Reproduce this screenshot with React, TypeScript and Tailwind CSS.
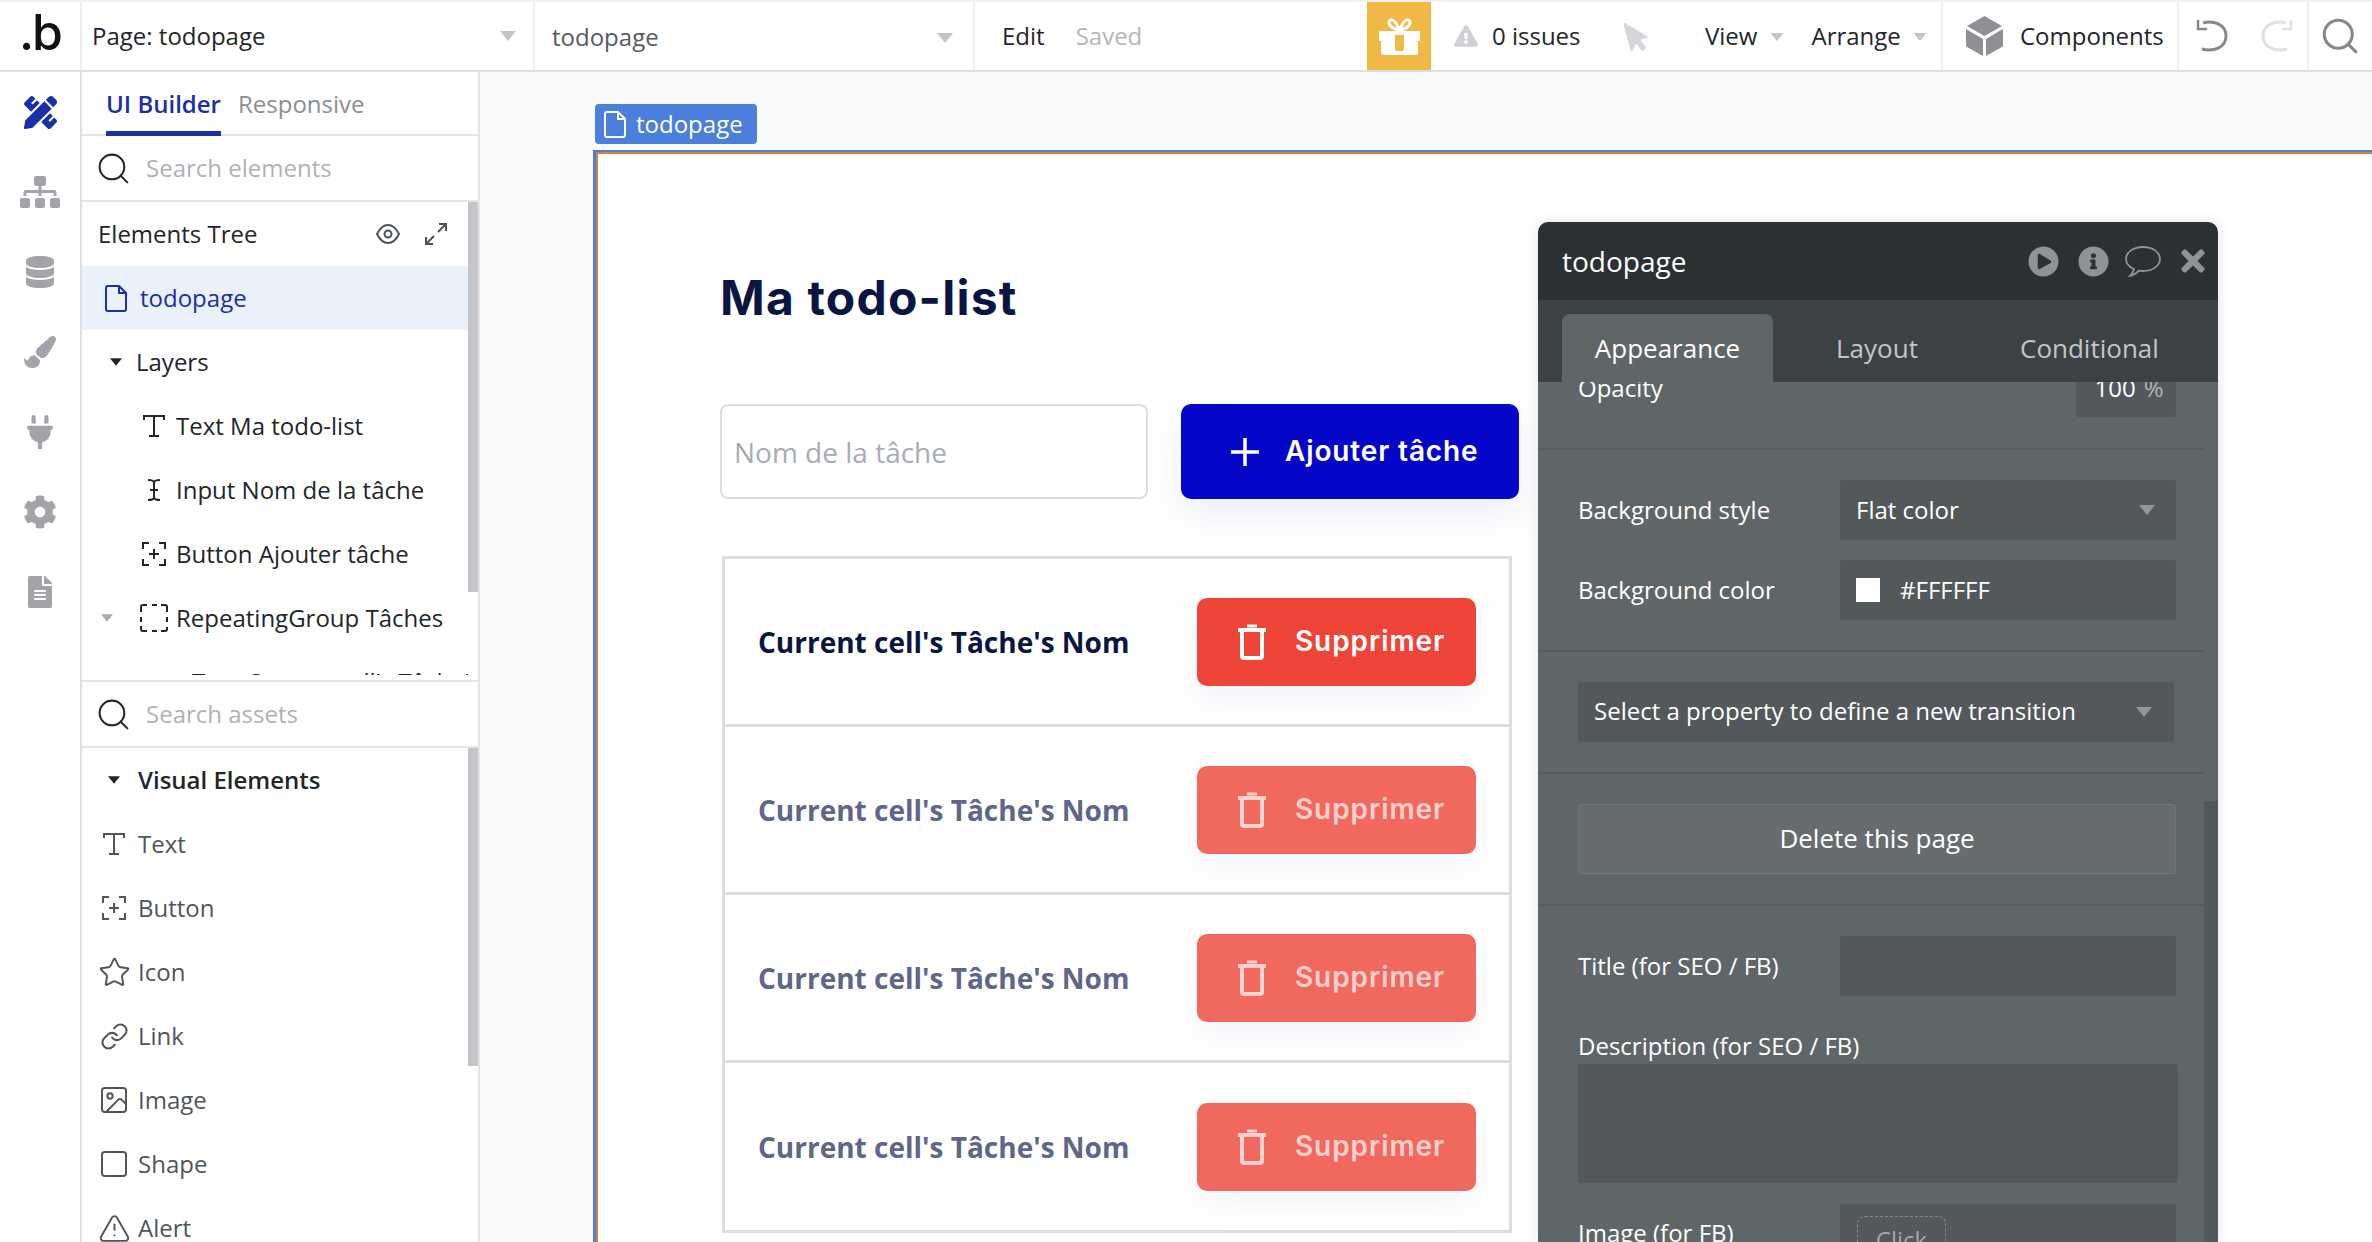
import React from 'react';
import {
  FaCog,
  FaDatabase,
  FaExclamationTriangle,
  FaFileAlt,
  FaInfoCircle,
  FaMousePointer,
  FaPaintBrush,
  FaPencilRuler,
  FaPlayCircle,
  FaPlug,
  FaSitemap,
  FaTimes,
} from 'react-icons/fa';
import { Image, Link, Search, Square, Star, TriangleAlert } from 'lucide-react';

const Caret = ({ className }: { className: string }) => (
  <svg viewBox="0 0 16 10" className={className} fill="currentColor">
    <path d="M0 0h16L8 10z" />
  </svg>
);

const PageIcon = ({ className }: { className: string }) => (
  <svg viewBox="0 0 22 27" className={className} fill="none" stroke="currentColor" strokeWidth="2">
    <path d="M3 1h11l7 7v16a2 2 0 0 1-2 2H3a2 2 0 0 1-2-2V3a2 2 0 0 1 2-2z" />
    <path d="M14 1v7h7" />
  </svg>
);

const TextIcon = () => (
  <svg viewBox="0 0 22 22" className="w-[22px] h-[22px]" fill="none" stroke="currentColor" strokeWidth="2">
    <path d="M1 5V1h20v4M11 1v20M6 21h10" />
  </svg>
);

const InputIcon = () => (
  <svg viewBox="0 0 14 22" className="w-[14px] h-[22px]" fill="none" stroke="currentColor" strokeWidth="2">
    <path d="M1 1c3 0 5 0 6 2 1-2 3-2 6-2M7 3v16M1 21c3 0 5 0 6-2 1 2 3 2 6 2M3 11h8" />
  </svg>
);

const ButtonIcon = () => (
  <svg viewBox="0 0 24 24" className="w-[24px] h-[24px]" fill="none" stroke="currentColor" strokeWidth="2">
    <path d="M1 7V1h6M17 1h6v6M23 17v6h-6M7 23H1v-6M12 7v10M7 12h10" />
  </svg>
);

const GroupIcon = () => (
  <svg viewBox="0 0 28 28" className="w-[28px] h-[28px]" fill="none" stroke="currentColor" strokeWidth="2">
    <path d="M1 8V3a2 2 0 0 1 2-2h4M12 1h5M21 1h4a2 2 0 0 1 2 2v5M27 13v5M1 13v5M1 22v3a2 2 0 0 0 2 2h4M12 27h5M21 27h4a2 2 0 0 0 2-2v-2" />
  </svg>
);

const TrashIcon = () => (
  <svg viewBox="0 0 28 36" className="w-[28px] h-[36px]" fill="none" stroke="currentColor" strokeWidth="4">
    <path d="M0 6h28" />
    <path d="M9 2h10" strokeWidth="3" />
    <path d="M4 8v24a2 2 0 0 0 2 2h16a2 2 0 0 0 2-2V8" />
  </svg>
);

const Supprimer = ({ faded }: { faded?: boolean }) => (
  <div
    className={
      faded
        ? 'w-[279px] h-[88px] rounded-[10px] bg-[#f1695e] flex items-center pl-[41px] gap-[29px] text-white/70 shadow-[0_12px_30px_rgba(70,90,170,0.06)]'
        : 'w-[279px] h-[88px] rounded-[10px] bg-[#ef4538] flex items-center pl-[41px] gap-[29px] text-white shadow-[0_12px_30px_rgba(70,90,170,0.08)]'
    }
  >
    <TrashIcon />
    <span className="font-['Inter',sans-serif] font-semibold text-[28px] leading-none tracking-[0.9px] -mt-[2px]">Supprimer</span>
  </div>
);

const TaskRow = ({ faded, last }: { faded?: boolean; last?: boolean }) => (
  <div className={last ? 'h-[167px] flex items-center justify-between pl-[33px] pr-[33px]' : 'h-[168px] border-b-[3px] border-[#dcdde3] flex items-center justify-between pl-[33px] pr-[33px]'}>
    <span className={faded ? 'font-bold text-[28px] text-[#5f6788]' : 'font-bold text-[28px] text-[#0a1641]'}>Current cell's Tâche's Nom</span>
    <Supprimer faded={faded} />
  </div>
);

const TreeRow = ({ icon, label, caret }: { icon: React.ReactNode; label: string; caret?: boolean }) => (
  <div className="h-[64px] flex items-center text-[#22262a] text-[24px]">
    <div className="w-[32px] pl-[17px] flex justify-center shrink-0">{caret && <Caret className="w-[12px] h-[8px] text-[#a9abb0] shrink-0" />}</div>
    <div className="w-[62px] pl-[18px] flex justify-center shrink-0">{icon}</div>
    <span>{label}</span>
  </div>
);

const AssetRow = ({ icon, label }: { icon: React.ReactNode; label: string }) => (
  <div className="h-[64px] flex items-center text-[#50555a] text-[24px]">
    <div className="w-[56px] pl-[8px] flex justify-center shrink-0">{icon}</div>
    <span>{label}</span>
  </div>
);

const Field = ({ label, children }: { label: string; children?: React.ReactNode }) => (
  <div className="flex items-center h-[60px]">
    <span className="w-[262px] shrink-0">{label}</span>
    <div className="w-[336px] h-[60px] rounded-[3px] bg-[#53585b] flex items-center px-[16px] shrink-0">{children}</div>
  </div>
);

const SearchRow = ({ placeholder }: { placeholder: string }) => (
  <div className="h-[66px] border-b-2 border-[#e8e4e4] flex items-center pl-[13px] gap-[14px] shrink-0">
    <Search className="w-[37px] h-[37px] text-[#22262a]" strokeWidth={1.3} />
    <span className="text-[24px] text-[#b0b2b6]">{placeholder}</span>
  </div>
);

const App = () => {
  return (
    <div className="w-[2372px] h-[1242px] overflow-hidden flex flex-col bg-white font-['Open_Sans',sans-serif]">
      {/* Top bar */}
      <header className="h-[72px] shrink-0 border-t-2 border-b-2 border-t-[#f0f0f0] border-b-[#dcdde3] flex items-center text-[24px] text-[#22262a]">
        <div className="w-[82px] h-full border-r-2 border-[#eeeeee] flex items-center justify-center shrink-0">
          <span className="font-['Inter',sans-serif] font-medium text-[50px] leading-none text-[#111] -mt-[8px] tracking-[-2px]">.b</span>
        </div>
        <div className="w-[453px] h-full border-r-2 border-[#eeeeee] flex items-center justify-between pl-[10px] pr-[17px] shrink-0">
          <span>Page: todopage</span>
          <Caret className="w-[16px] h-[10px] text-[#c4c4c4]" />
        </div>
        <div className="w-[440px] h-full border-r-2 border-[#eeeeee] flex items-center justify-between pl-[17px] pr-[20px] shrink-0 text-[#555a5e]">
          <span className="mt-[2px]">todopage</span>
          <Caret className="w-[16px] h-[10px] text-[#c4c4c4] mt-[4px]" />
        </div>
        <div className="w-[392px] flex items-center pl-[27px] gap-[31px] shrink-0">
          <span>Edit</span>
          <span className="text-[#b4b6ba]">Saved</span>
        </div>
        <div className="w-[64px] h-full bg-[#f2b845] flex items-center justify-center shrink-0">
          <svg viewBox="0 0 41 37" className="w-[41px] h-[37px]">
            <path d="M20.500 12C17 4 14 1 11.500 2 8 3.500 10 10 20.500 12zM20.500 12C24 4 27 1 29.500 2 33 3.500 31 10 20.500 12z" fill="none" stroke="#fff" strokeWidth="3" />
            <rect x="0" y="13" width="41" height="10" rx="1" fill="#fff" />
            <rect x="2" y="23" width="37" height="14" rx="2" fill="#fff" />
            <path d="M16 17h9v14a2 2 0 0 1-2 2h-5a2 2 0 0 1-2-2z" fill="#f2b845" />
          </svg>
        </div>
        <div className="flex items-center pl-[23px] gap-[14px] w-[190px] shrink-0">
          <FaExclamationTriangle className="w-[24px] h-[24px] text-[#cfd0d3]" />
          <span>0 issues</span>
        </div>
        <FaMousePointer className="w-[32px] h-[32px] text-[#d5d6da] -rotate-[15deg] shrink-0" />
        <div className="flex items-center pl-[52px] w-[288px] shrink-0">
          <span>View</span>
          <Caret className="w-[14px] h-[8px] text-[#c4c4c4] ml-[13px] mt-[2px]" />
          <span className="ml-[27px]">Arrange</span>
          <Caret className="w-[14px] h-[8px] text-[#c4c4c4] ml-[12px] mt-[2px]" />
        </div>
        <div className="h-full w-[238px] border-l-2 border-r-2 border-[#eeeeee] flex items-center pl-[23px] gap-[17px] shrink-0">
          <svg viewBox="0 0 37 40" className="w-[37px] h-[40px] text-[#8e9094]" fill="currentColor">
            <path d="M18.500 0 36 10 18.500 20 1 10z" />
            <path d="M0 13l17 10v17L1 31a2 2 0 0 1-1-2z" />
            <path d="M37 13 20 23v17l16-9a2 2 0 0 0 1-2z" />
          </svg>
          <span>Components</span>
        </div>
        <div className="h-full w-[130px] border-r-2 border-[#eeeeee] flex items-center pl-[17px] gap-[33px] shrink-0">
          <svg viewBox="0 0 32 34" className="w-[32px] h-[34px] text-[#85888c]" fill="none" stroke="currentColor" strokeWidth="3">
            <path d="M7 4c10-3 23 1 23 13S17 33 6 30" />
            <path d="M2 1v9h9" strokeWidth="2.5" />
          </svg>
          <svg viewBox="0 0 32 34" className="w-[32px] h-[34px] text-[#dfe0e3]" fill="none" stroke="currentColor" strokeWidth="3">
            <path d="M25 4C15 1 2 5 2 17s13 16 24 13" />
            <path d="M30 1v9h-9" strokeWidth="2.5" />
          </svg>
        </div>
        <div className="pl-[10px]">
          <Search className="w-[42px] h-[42px] text-[#85888c]" strokeWidth={1.8} />
        </div>
      </header>

      <div className="flex-1 flex min-h-0">
        {/* Icon rail */}
        <nav className="w-[82px] shrink-0 border-r-2 border-[#dfe0e6] flex flex-col items-center text-[#a2a4a9]">
          <div className="h-[80px] flex items-center justify-center"><FaPencilRuler className="w-[33px] h-[33px] text-[#1a2fa8]" /></div>
          <div className="h-[80px] flex items-center justify-center"><FaSitemap className="w-[40px] h-[34px]" /></div>
          <div className="h-[80px] flex items-center justify-center"><FaDatabase className="w-[30px] h-[32px]" /></div>
          <div className="h-[80px] flex items-center justify-center"><FaPaintBrush className="w-[32px] h-[32px]" /></div>
          <div className="h-[80px] flex items-center justify-center"><FaPlug className="w-[32px] h-[34px]" /></div>
          <div className="h-[80px] flex items-center justify-center"><FaCog className="w-[34px] h-[34px]" /></div>
          <div className="h-[80px] flex items-center justify-center"><FaFileAlt className="w-[26px] h-[32px]" /></div>
        </nav>

        {/* Left panel */}
        <aside className="w-[398px] shrink-0 border-r-2 border-[#e8e4e4] flex flex-col">
          <div className="h-[64px] shrink-0 border-b-2 border-[#e8e4e4] flex items-start pl-[24px] gap-[17px] text-[24px]">
            <span className="h-[64px] pt-[5px] border-b-[5px] border-[#1a2fa8] flex items-center font-semibold text-[#1a2fa8]">UI Builder</span>
            <span className="h-[62px] pt-[1px] flex items-center text-[#8b8e93]">Responsive</span>
          </div>
          <SearchRow placeholder="Search elements" />
          <div className="h-[480px] shrink-0 border-b-2 border-[#e8e4e4] flex">
            <div className="flex-1 min-w-0 h-[473px] overflow-hidden">
              <div className="h-[64px] flex items-center justify-between pl-[16px] pr-[20px]">
                <span className="text-[24px] font-medium text-[#22262a]">Elements Tree</span>
                <div className="flex items-center gap-[24px] text-[#4c5156]">
                  <svg viewBox="0 0 24 20" className="w-[24px] h-[20px]" fill="none" stroke="currentColor" strokeWidth="2">
                    <path d="M1 10c3-6 7-9 11-9s8 3 11 9c-3 6-7 9-11 9S4 16 1 10z" />
                    <circle cx="12" cy="10" r="3.500" />
                  </svg>
                  <svg viewBox="0 0 24 24" className="w-[24px] h-[24px]" fill="none" stroke="currentColor" strokeWidth="2">
                    <path d="M22 2 14 10M15 2h7v7M2 22l8-8M2 15v7h7" />
                  </svg>
                </div>
              </div>
              <div className="h-[64px] bg-[#eaf1fb] flex items-center pl-[23px] gap-[13px] text-[#1a2fa8] text-[24px]">
                <PageIcon className="w-[22px] h-[27px]" />
                <span>todopage</span>
              </div>
              <div className="h-[64px] flex items-center pl-[28px] gap-[14px] text-[24px] font-medium text-[#22262a]">
                <Caret className="w-[12px] h-[8px] text-[#22262a]" />
                <span>Layers</span>
              </div>
              <TreeRow icon={<TextIcon />} label="Text Ma todo-list" />
              <TreeRow icon={<InputIcon />} label="Input Nom de la tâche" />
              <TreeRow icon={<ButtonIcon />} label="Button Ajouter tâche" />
              <TreeRow icon={<GroupIcon />} label="RepeatingGroup Tâches" caret />
              <div className="h-[64px] flex items-center pl-[96px] gap-[14px] text-[24px] text-[#22262a] whitespace-nowrap">
                <TextIcon />
                <span>Text Current cell's Tâche's Nom</span>
              </div>
            </div>
            <div className="w-[10px] shrink-0"><div className="h-[390px] bg-[#c4c5c8]" /></div>
          </div>
          <SearchRow placeholder="Search assets" />
          <div className="flex-1 min-h-0 flex overflow-hidden">
            <div className="flex-1 min-w-0">
              <div className="h-[64px] flex items-center pl-[26px] gap-[18px] text-[24px] font-semibold text-[#22262a]">
                <Caret className="w-[12px] h-[8px] text-[#22262a]" />
                <span>Visual Elements</span>
              </div>
              <AssetRow icon={<TextIcon />} label="Text" />
              <AssetRow icon={<ButtonIcon />} label="Button" />
              <AssetRow icon={<Star className="w-[33px] h-[33px] shrink-0" strokeWidth={1.4} />} label="Icon" />
              <AssetRow icon={<Link className="w-[29px] h-[29px] shrink-0" strokeWidth={1.7} />} label="Link" />
              <AssetRow icon={<Image className="w-[32px] h-[32px] shrink-0" strokeWidth={1.5} />} label="Image" />
              <AssetRow icon={<Square className="w-[32px] h-[32px] shrink-0" strokeWidth={1.5} />} label="Shape" />
              <AssetRow icon={<TriangleAlert className="w-[33px] h-[33px] shrink-0" strokeWidth={1.4} />} label="Alert" />
            </div>
            <div className="w-[10px] shrink-0"><div className="h-[318px] bg-[#c4c5c8]" /></div>
          </div>
        </aside>

        {/* Canvas */}
        <main className="flex-1 min-w-0 bg-[#f8f9fb] pl-[113px] pt-[32px]">
          <div className="w-[162px] h-[40px] ml-[2px] mb-[6px] rounded-[4px] bg-[#4a7fdb] flex items-center pl-[9px] gap-[10px] text-white text-[24px]">
            <PageIcon className="w-[22px] h-[27px]" />
            <span>todopage</span>
          </div>
          <div className="relative h-[1200px] border-t-2 border-l-[3px] border-[#4a7fdb]">
            <div className="h-full border-t-2 border-l-2 border-[#e07f2e] bg-white pl-[122px] pt-[114px]">
              <h1 className="font-['Inter',sans-serif] font-bold text-[48px] leading-[60px] text-[#0a1641] tracking-[1.2px]">Ma todo-list</h1>
              <div className="flex gap-[33px] mt-[76px]">
                <div className="w-[428px] h-[95px] rounded-[8px] border-2 border-[#dcdde3] flex items-center pl-[12px] text-[28px] text-[#a8abb2]">Nom de la tâche</div>
                <div className="w-[338px] h-[95px] rounded-[10px] bg-[#0606c8] flex items-center pl-[50px] gap-[26px] text-white shadow-[0_14px_34px_rgba(70,90,170,0.1)]">
                  <svg viewBox="0 0 28 28" className="w-[28px] h-[28px]" fill="none" stroke="currentColor" strokeWidth="3.5">
                    <path d="M14 0v28M0 14h28" />
                  </svg>
                  <span className="font-['Inter',sans-serif] font-semibold text-[28px] leading-none tracking-[0.85px] -mt-[2px]">Ajouter tâche</span>
                </div>
              </div>
              <div className="w-[790px] ml-[2px] mt-[57px] border-[3px] border-[#dcdde3]">
                <TaskRow />
                <TaskRow faded />
                <TaskRow faded />
                <TaskRow faded last />
              </div>
            </div>

            {/* Property editor floating over the page */}
            <div className="absolute left-[942px] top-[70px] w-[680px] h-[1020px] rounded-t-[10px] overflow-hidden flex flex-col text-white text-[24px] shadow-[0_0_14px_rgba(0,0,0,0.12)]">
              <div className="h-[78px] shrink-0 bg-[#2b3133] flex items-center justify-between pl-[23px] pr-[13px]">
                <span className="text-[28px] ml-[1px]">todopage</span>
                <div className="flex items-center text-[#8f9396]">
                  <FaPlayCircle className="w-[31px] h-[31px]" />
                  <FaInfoCircle className="w-[31px] h-[31px] ml-[19px]" />
                  <svg viewBox="0 0 36 32" className="w-[36px] h-[32px] ml-[16px]" fill="none" stroke="currentColor" strokeWidth="1.8">
                    <path d="M9 24C4 22 1 18 1 14 1 7 8.500 2 18 2s17 5 17 12-7.500 12-17 12c-1.500 0-2.500 0-4-.3C12 28 9.500 30 5 31c2-2 3.500-4 4-7z" />
                  </svg>
                  <FaTimes className="w-[24px] h-[34px] ml-[20px]" />
                </div>
              </div>
              <div className="h-[82px] shrink-0 bg-[#3c4144] flex items-end pl-[24px] text-[#c3c6c8] text-[26px]">
                <div className="w-[211px] h-[68px] rounded-t-[8px] bg-[#5f6668] flex items-center justify-center text-white">Appearance</div>
                <div className="w-[208px] h-[68px] flex items-center justify-center">Layout</div>
                <div className="flex-1 pl-[39px] h-[68px] flex items-center">Conditional</div>
              </div>
              <div className="flex-1 min-h-0 bg-[#5f6668] flex overflow-hidden">
                <div className="flex-1 min-w-0 -mt-[25px]">
                  <div className="h-[91px] flex items-start pl-[40px] pr-[28px] justify-between">
                    <span className="leading-[62px]">Opacity</span>
                    <div className="w-[100px] h-[60px] rounded-[3px] bg-[#53585b] flex items-center justify-center gap-[8px] pl-[6px] pt-[2px]">
                      <span>100</span><span className="text-[#b0b3b5]">%</span>
                    </div>
                  </div>
                  <div className="border-t-2 border-[#565b5e] py-[30px] pl-[40px] flex flex-col gap-[20px]">
                    <Field label="Background style">
                      <span className="flex-1">Flat color</span>
                      <Caret className="w-[16px] h-[10px] text-[#95989a] mr-[5px]" />
                    </Field>
                    <Field label="Background color">
                      <div className="w-[24px] h-[24px] bg-white mr-[20px]" />
                      <span>#FFFFFF</span>
                    </Field>
                  </div>
                  <div className="border-t-2 border-[#565b5e] py-[30px] pl-[40px]">
                    <div className="w-[596px] h-[60px] rounded-[3px] bg-[#53585b] flex items-center justify-between pl-[16px] pr-[22px]">
                      <span className="-mt-[2px]">Select a property to define a new transition</span>
                      <Caret className="w-[16px] h-[10px] text-[#95989a]" />
                    </div>
                  </div>
                  <div className="border-t-2 border-[#565b5e] py-[30px] pl-[40px]">
                    <div className="w-[598px] h-[70px] rounded-[3px] bg-[#676c6f] border border-[#72777a] flex items-center justify-center text-[26px] pb-[2px]">Delete this page</div>
                  </div>
                  <div className="border-t-2 border-[#565b5e] pt-[30px] pl-[40px]">
                    <Field label="Title (for SEO / FB)" />
                    <div className="mt-[34px] mb-[2px] leading-[32px]">Description (for SEO / FB)</div>
                    <div className="w-[600px] h-[119px] rounded-[3px] bg-[#53585b]" />
                    <div className="flex items-start mt-[21px]">
                      <span className="w-[262px] leading-[58px]">Image (for FB)</span>
                      <div className="w-[336px] h-[60px] rounded-[3px] bg-[#53585b] pl-[17px] pt-[12px]">
                        <div className="w-[89px] h-[48px] rounded-[8px] border border-dashed border-[#85898b] flex items-center justify-center text-[#a5a8aa]">Click</div>
                      </div>
                    </div>
                  </div>
                </div>
                <div className="w-[14px] shrink-0 pt-[419px]"><div className="h-full bg-[#53585b]" /></div>
              </div>
            </div>
          </div>
        </main>
      </div>
    </div>
  );
};

export default App;
